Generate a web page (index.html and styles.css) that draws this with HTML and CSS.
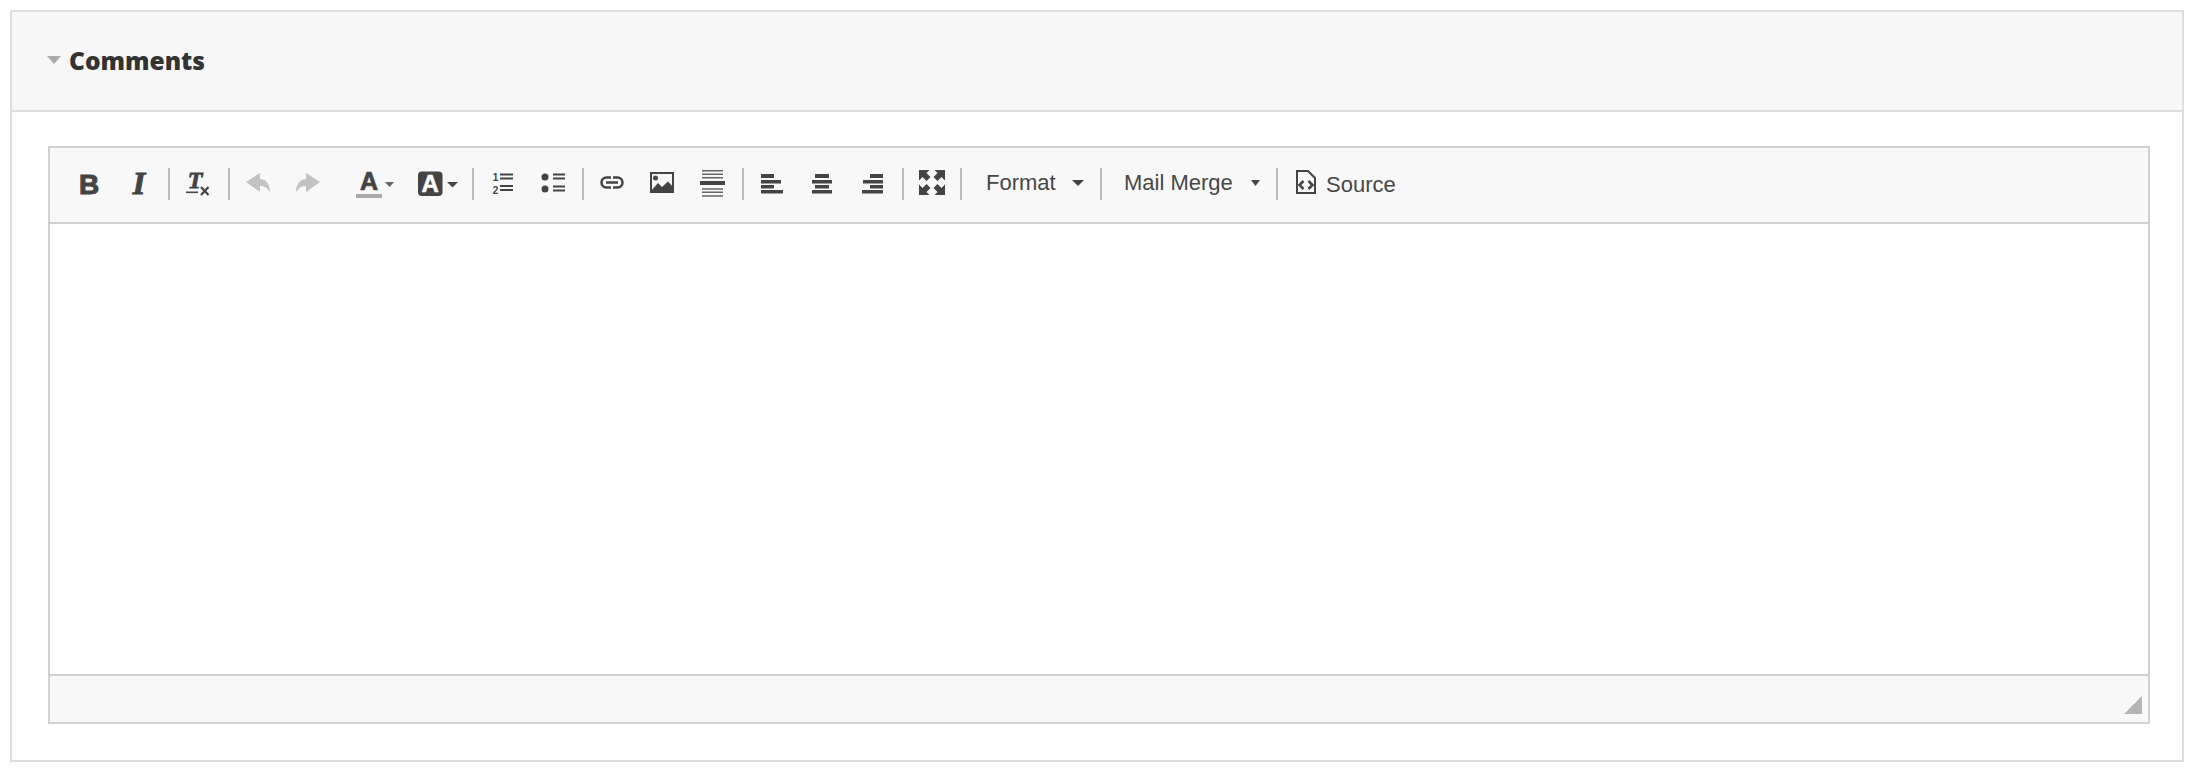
FILE: index.html
```html
<!DOCTYPE html>
<html lang="en">
<head>
<meta charset="utf-8">
<title>Comments</title>
<link rel="stylesheet" href="styles.css">
</head>
<body>
<section class="panel">
  <header class="panel-head">
    <span class="caret"></span>
    <h2 class="panel-title">Comments</h2>
  </header>
  <div class="panel-body">
    <div class="editor">
      <div class="toolbar">
        <span class="btn"><svg class="ico" viewBox="0 0 32 32"><text class="g-b" x="16" y="26">B</text></svg></span>
        <span class="btn"><svg class="ico" viewBox="0 0 32 32"><text class="g-i" x="16" y="26">I</text></svg></span>
        <span class="sep"></span>
        <span class="btn"><svg class="ico" viewBox="0 0 32 32"><text class="g-t" x="12" y="20">T</text><rect class="f" x="3" y="23.5" width="12" height="1.6"/><path class="s" d="M18 19l7.5 8M25.5 19l-7.500 8"/></svg></span>
        <span class="sep"></span>
        <span class="btn"><svg class="ico" viewBox="0 0 32 32"><path class="off" d="M3 14L17 5v6c7 .5 10 6.500 10 13-3-4.500-6-6-10-6v6z"/></svg></span>
        <span class="btn"><svg class="ico" viewBox="0 0 32 32"><path class="off" d="M27 14L13 5v6c-7 .5-10 6.500-10 13 3-4.500 6-6 10-6v6z"/></svg></span>
        <span class="btn btn-color"><svg class="ico-wide" viewBox="0 0 69 32"><text class="g-a" x="35" y="22">A</text><rect class="bar" x="22" y="26" width="26" height="4"/><path class="tri" d="M51 14h9l-4.500 5z"/></svg></span>
        <span class="btn btn-color"><svg class="ico-wide" viewBox="0 0 69 32"><rect class="f" x="15" y="3.500" width="24.500" height="24.500" rx="4"/><text class="g-a2" x="27.200" y="24">A</text><path class="tri2" d="M44 14h11l-5.500 5.500z"/></svg></span>
        <span class="sep sep-after"></span>
        <span class="btn"><svg class="ico" viewBox="0 0 32 32"><text class="g-n" x="8.500" y="13">1</text><text class="g-n" x="8.500" y="25.500">2</text><path class="l" d="M13 6.500h13M13 10.500h13M13 18h13M13 22h13"/></svg></span>
        <span class="btn"><svg class="ico" viewBox="0 0 32 32"><circle class="f" cx="8" cy="9" r="3.500"/><circle class="f" cx="8" cy="21" r="3.500"/><path class="l" d="M16 6.500h12M16 10.500h12M16 18.500h12M16 22.500h12"/></svg></span>
        <span class="sep"></span>
        <span class="btn"><svg class="ico" viewBox="0 0 32 32"><path class="s3" d="M14 9.500H9.500a5 5 0 0 0 0 10H14M16 9.500h4.500a5 5 0 0 1 0 10H16M9 14.500h12"/></svg></span>
        <span class="btn"><svg class="ico" viewBox="0 0 32 32"><rect class="s2" x="4" y="5" width="22" height="19"/><circle class="f" cx="8.500" cy="10" r="2.500"/><path class="f" d="M4 23l7-8 4 4 6-5.500 5 5.500v5H4z"/></svg></span>
        <span class="btn"><svg class="ico" viewBox="0 0 32 32"><path class="l2" d="M5 2.700h21M5 6.300h21M5 9.700h21M5 21h21M5 24.300h21M5 28h21"/><rect class="f" x="3" y="13" width="25" height="4"/></svg></span>
        <span class="sep"></span>
        <span class="btn"><svg class="ico" viewBox="0 0 32 32"><path class="f" d="M4 6h13v4H4zM4 12h20v3.500H4zM4 17h13v3.500H4zM4 22h22v3.500H4z"/></svg></span>
        <span class="btn"><svg class="ico" viewBox="0 0 32 32"><path class="f" d="M8 6h14v4H8zM5 12h20v3.500H5zM8 17h14v3.500H8zM5 22h20v3.500H5z"/></svg></span>
        <span class="btn"><svg class="ico" viewBox="0 0 32 32"><path class="f" d="M13 6h13v4H13zM6 12h20v3.500H6zM13 17h13v3.500H13zM5 22h21v3.500H5z"/></svg></span>
        <span class="sep"></span>
        <span class="btn"><svg class="ico" viewBox="0 0 32 32"><path class="f" d="M2 2h10.500l-3 3 4 4-4 4-4-4-3.500 3.500zM28 2H17.500l3 3-4 4 4 4 4-4 3.500 3.500zM2 27H12.500l-3-3 4-4-4-4-4 4L2 16.500zM28 27H17.500l3-3-4-4 4-4 4 4 3.500-3.500z"/></svg></span>
        <span class="sep sep-tight"></span>
        <span class="combo combo-format"><span class="combo-label">Format</span><svg class="combo-arrow arrow-lg" viewBox="0 0 12 6"><path class="f" d="M0 0h12L6 6z"/></svg></span>
        <span class="sep sep-none"></span>
        <span class="combo combo-merge"><span class="combo-label">Mail Merge</span><svg class="combo-arrow arrow-sm" viewBox="0 0 9 6"><path class="f" d="M0 0h9L4.500 6z"/></svg></span>
        <span class="sep sep-none"></span>
        <span class="source"><svg class="ico" viewBox="0 0 32 32"><path class="s2" d="M7 3h11l7 7v15H7z"/><path class="s3" d="M13.500 13l-4 4 4 4M18.500 13l4 4-4 4"/></svg><span class="source-label">Source</span></span>
      </div>
      <div class="content"></div>
      <div class="statusbar"><span class="resizer"></span></div>
    </div>
  </div>
</section>
</body>
</html>
```

FILE: styles.css
```css
* { box-sizing: border-box; }
html, body { margin: 0; padding: 0; background: #fff; }
body { padding: 10px 20px 8px 10px; font-family: "Liberation Sans", Arial, sans-serif; color: #474747; }
svg { overflow: visible; }

.panel { border: 2px solid #dedede; height: 752px; display: flex; flex-direction: column; }
.panel-head { height: 100px; background: #f7f7f7; border-bottom: 2px solid #dedede; display: flex; align-items: center; padding: 0 0 2px 35px; }
.caret { width: 0; height: 0; border-left: 7.5px solid transparent; border-right: 7.5px solid transparent; border-top: 8px solid #aaa; margin-right: 8px; }
.panel-title { margin: 0; font: 800 24.5px "Open Sans", sans-serif; color: #333; }

.panel-body { flex: 1; padding: 34px 32px 36px 36px; display: flex; }
.editor { flex: 1; border: 2px solid #d1d1d1; display: flex; flex-direction: column; }

.toolbar { height: 76px; background: #f8f8f8; border-bottom: 2px solid #d1d1d1; display: flex; align-items: center; padding: 0 0 2px 14px; }
.btn { width: 50px; height: 32px; display: flex; justify-content: center; flex: none; }
.btn-color { width: 69px; }
.ico { width: 32px; height: 32px; display: block; flex: none; }
.ico-wide { width: 69px; height: 32px; display: block; }
.sep { width: 2px; height: 32px; background: #bcbcbc; margin: 0 4px; flex: none; }
.sep-after { margin: 0 4px 0 0; }
.sep-tight { margin: 0 0 0 2px; }
.sep-none { margin: 0; }

.combo { height: 32px; display: flex; align-items: center; flex: none; font-size: 22px; padding-bottom: 3px; }
.combo-format { width: 138px; padding-left: 24px; }
.combo-merge { width: 174px; padding-left: 22px; }
.combo-arrow { height: 6px; display: block; }
.arrow-lg { width: 12px; margin-left: 16px; }
.arrow-sm { width: 9px; margin-left: 18px; }
.source { display: flex; align-items: center; padding-left: 12px; font-size: 22px; }
.source-label { margin-left: 4px; padding-top: 2px; }

.content { flex: 1; background: #fff; }
.statusbar { height: 48px; background: #f8f8f8; border-top: 2px solid #d1d1d1; display: flex; justify-content: flex-end; align-items: flex-end; padding: 0 6px 8px 0; }
.resizer { width: 0; height: 0; border-left: 18px solid transparent; border-bottom: 18px solid #b5b5b5; }

.f { fill: #444; }
.s { fill: none; stroke: #444; stroke-width: 2.2; }
.s2 { fill: none; stroke: #444; stroke-width: 2; }
.s3 { fill: none; stroke: #444; stroke-width: 2.500; }
.l { fill: none; stroke: #444; stroke-width: 1.800; }
.l2 { fill: none; stroke: #666; stroke-width: 1.500; }
.off { fill: #c2c2c2; }
.bar { fill: #aaa; }
.tri { fill: #666; }
.tri2 { fill: #444; }
.g-b { font: 700 28px "Liberation Sans", sans-serif; fill: #444; stroke: #444; stroke-width: 1; text-anchor: middle; }
.g-i { font: italic 700 32px "Liberation Serif", serif; fill: #444; stroke: #444; stroke-width: 1; text-anchor: middle; }
.g-t { font: italic 700 24px "Liberation Serif", serif; fill: #444; stroke: #444; stroke-width: .8; text-anchor: middle; }
.g-a { font: 700 25px "Liberation Sans", sans-serif; fill: #444; stroke: #444; stroke-width: .7; text-anchor: middle; }
.g-a2 { font: 700 24px "Liberation Sans", sans-serif; fill: #fff; stroke: #fff; stroke-width: .5; text-anchor: middle; }
.g-n { font: 700 10px "Liberation Sans", sans-serif; fill: #444; text-anchor: middle; }
```
